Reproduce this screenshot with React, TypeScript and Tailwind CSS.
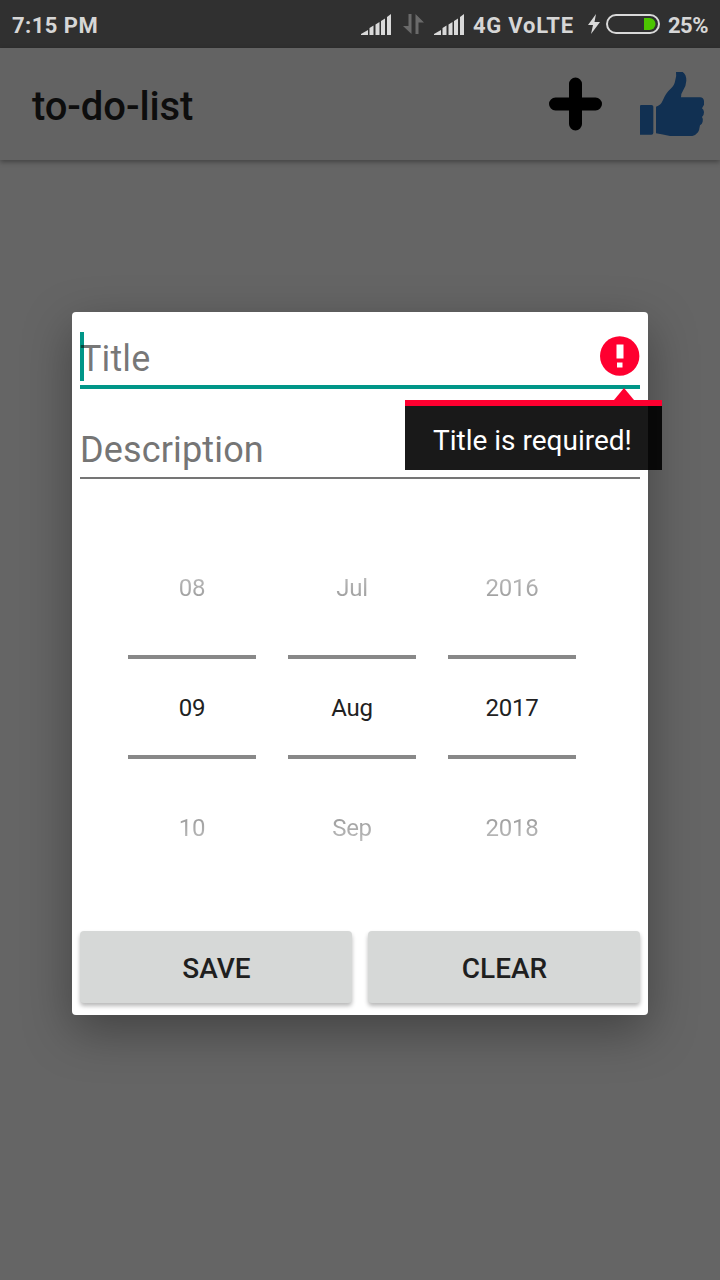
import React from "react";

function Signal() {
  return (
    <svg className="h-[21px] w-[31px]" viewBox="0 0 31 21" fill="#d9d9d9">
      <path d="M0 21V20L7 16V21ZM8.500 21V14L12.500 11.500V21ZM14.500 21V10.500L18.500 8V21ZM20 21V7L24 4.500V21ZM26 21V3L30 0V21Z" />
    </svg>
  );
}

function StatusBar() {
  return (
    <header className="flex h-12 items-center bg-[#303030] pl-3 text-[22px] leading-[26px] font-bold whitespace-nowrap text-[#d6d6d6]">
      <span className="w-[349px] pt-[3px] tracking-[0.45px]">7:15 PM</span>
      <Signal />
      <svg className="ml-[11px] h-[20px] w-[22px]" viewBox="0 0 22 20" fill="#6a6a6a">
        <path d="M5.500 0H8.500V20L0 12H5.500ZM12.500 0L21 8.500H15.500V20H12.500Z" />
      </svg>
      <span className="w-[9px]" />
      <Signal />
      <span className="ml-[8px] w-[115px] pt-[3px] tracking-[0.75px]">4G VoLTE</span>
      <svg className="h-[20px] w-[12px]" viewBox="0 0 12 20" fill="#d9d9d9">
        <path d="M8 0L0 11H5L3 20L12 8H6.500Z" />
      </svg>
      <svg className="ml-[6px] h-[20px] w-[54px]" viewBox="0 0 54 20">
        <rect x="1" y="1" width="52" height="18" rx="9" fill="none" stroke="#d9d9d9" strokeWidth="2" />
        <path d="M38 4H43.500A6 6 0 0 1 43.500 16H38Z" fill="#4cc500" />
      </svg>
      <span className="ml-2 pt-[3px] tracking-[-0.5px]">25%</span>
    </header>
  );
}

function AppBar() {
  return (
    <div className="flex h-28 items-center bg-[#636363] pr-4 pl-8 shadow-[0_2px_5px_rgba(0,0,0,0.35)]">
      <h1 className="flex-1 pt-[6px] text-[40px] leading-[48px] font-medium tracking-[-0.1px] text-[#0d0d0d]">to-do-list</h1>
      <svg className="mr-[38px] h-[54px] w-[53px]" viewBox="0 0 53 54">
        <path d="M26.500 7V47M6.500 27H46.500" stroke="#000" strokeWidth="13" strokeLinecap="round" />
      </svg>
      <svg className="h-16 w-16" viewBox="0 0 192 192" fill="#113052">
        <path d="M0 102Q0 99 4 99H34Q40 99 40 104V182Q40 188 34 188H0Z" />
        <path d="M48 104Q62 101 69 84Q78 62 92 50Q103 42 106 24Q110 10 108 0H128Q139 7 139 26Q138 42 130 54Q122 66 123 76H180Q191 77 192 87V98Q188 105 186 109Q191 113 192 120Q192 130 186 135Q190 140 188 149Q186 157 180 160Q178 175 174 181Q168 189 157 192H90Q68 187 48 184Z" />
      </svg>
    </div>
  );
}

function PickerColumn({ values }: { values: string[] }) {
  return (
    <div className="flex w-32 flex-col text-center text-[24px] leading-7 tracking-[-0.3px]">
      <div className="h-[28px] bg-linear-to-b from-[#bdbdbd] to-[#9a9a9a] bg-clip-text text-transparent">{values[0]}</div>
      <div className="mt-[53px] mb-[55px] h-[104px] border-y-4 border-[#888] pt-[35px] text-[#212121]">{values[1]}</div>
      <div className="bg-linear-to-b from-[#989898] to-[#bdbdbd] bg-clip-text text-transparent">{values[2]}</div>
    </div>
  );
}

function DialogButton({ label }: { label: string }) {
  return (
    <button className="h-[72px] flex-1 rounded-[4px] bg-[#d6d8d7] pt-[3px] pl-px text-[28px] font-medium text-[#1f1f1f] shadow-[0_3px_4px_rgba(0,0,0,0.28)]">
      {label}
    </button>
  );
}

function TaskDialog() {
  return (
    <div className="absolute top-[312px] left-[72px] flex h-[703px] w-[576px] flex-col rounded-[4px] bg-white px-2 shadow-[0_16px_48px_rgba(0,0,0,0.34)]">
      <div className="relative flex h-[77px] justify-between border-b-4 border-[#009688] pt-5">
        <span className="absolute top-5 left-0 h-[49px] w-1 bg-[#009688]" />
        <span className="relative pt-[6px] text-[36px] leading-[43px] tracking-[0.1px] text-black/54">Title</span>
        <svg className="mt-1 h-10 w-10" viewBox="0 0 40 40">
          <circle cx="19.700" cy="20" r="19.700" fill="#ff0030" />
          <path d="M16.500 8.500H23.500V22.500H16.500ZM17 26.500H22.500V31.500H17Z" fill="#fff" />
        </svg>
      </div>
      <div className="h-[90px] border-b-2 border-[#757575] pt-[40px] text-[36px] leading-[43px] tracking-[0.15px] text-[#757575]">Description</div>
      <div className="mt-[95px] flex h-[357px] gap-8 pl-12">
        <PickerColumn values={["08", "09", "10"]} />
        <PickerColumn values={["Jul", "Aug", "Sep"]} />
        <PickerColumn values={["2016", "2017", "2018"]} />
      </div>
      <div className="flex gap-4">
        <DialogButton label="SAVE" />
        <DialogButton label="CLEAR" />
      </div>
      <div className="absolute top-[76px] left-[333px] w-[257px]">
        <svg className="ml-[209px] block h-3 w-5" viewBox="0 0 20 12">
          <path d="M0 12L10 0L20 12Z" fill="#ff0030" />
        </svg>
        <div className="h-[70px] border-t-[6px] border-[#ff0030] bg-black/90 bg-clip-padding pt-[18px] pl-7 text-[28px] leading-[33px] text-white">
          Title is required!
        </div>
      </div>
    </div>
  );
}

export default function App() {
  return (
    <main className="relative flex h-[1280px] w-[720px] flex-col overflow-hidden bg-[#656565] font-[Roboto,sans-serif]">
      <StatusBar />
      <AppBar />
      <TaskDialog />
    </main>
  );
}
